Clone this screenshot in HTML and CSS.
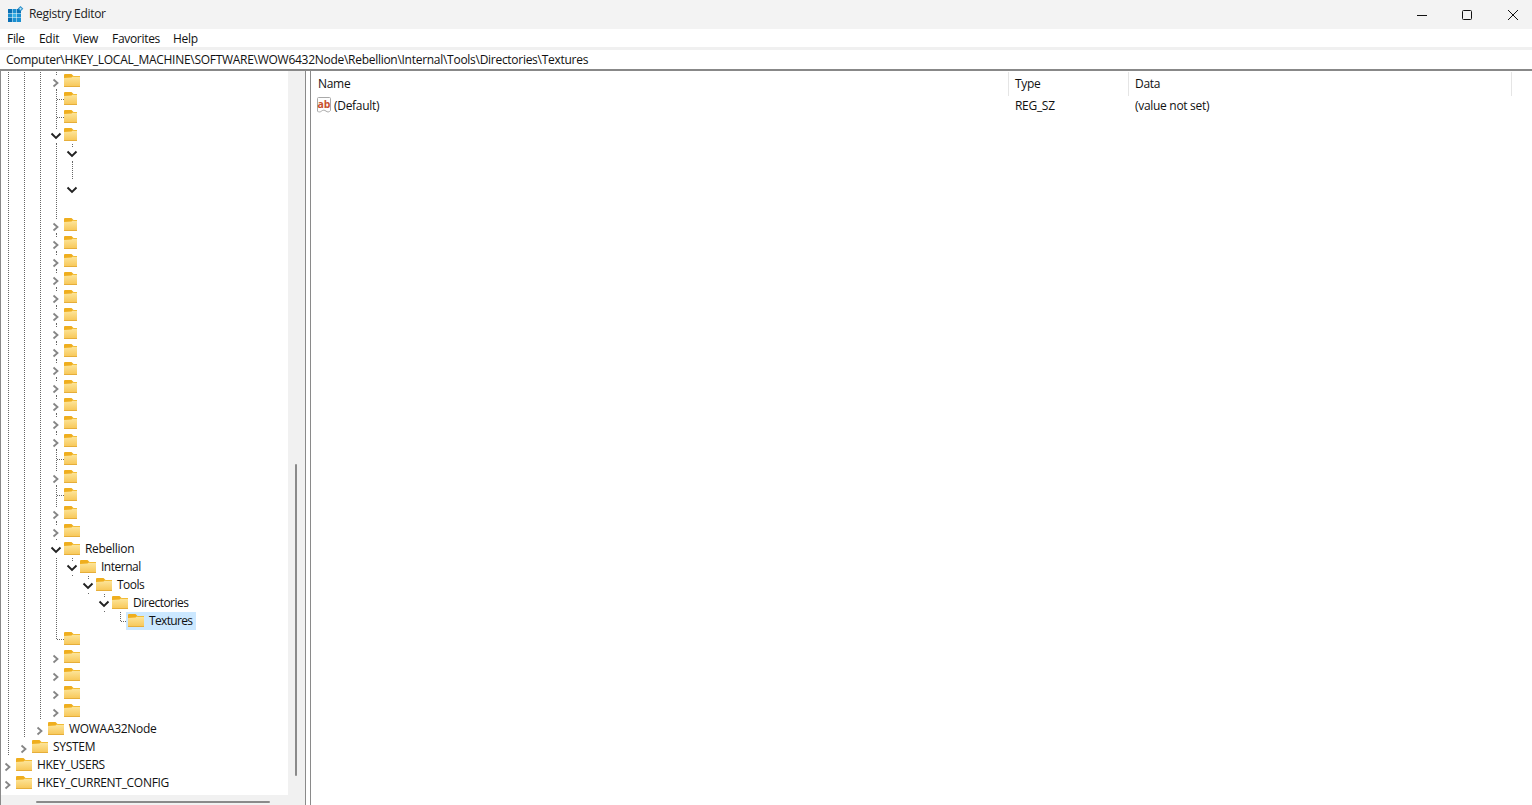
FILE: index.html
```html
<!DOCTYPE html>
<html lang="en">
<head>
<meta charset="utf-8">
<title>Registry Editor</title>
<link rel="stylesheet" href="styles.css">
</head>
<body>
<svg class="defs" xmlns="http://www.w3.org/2000/svg">
  <defs>
    <linearGradient id="fg" x1="0" y1="0" x2="0" y2="1">
      <stop offset="0" stop-color="#fde79f"/>
      <stop offset="1" stop-color="#f7c655"/>
    </linearGradient>
  </defs>
  <symbol id="folder" viewBox="0 0 16 18">
    <path d="M1 2h6.5l2 2H16v2H0V3a1 1 0 0 1 1-1z" fill="#efae1e"/>
    <path d="M0 6l7.5-.5L9.5 4H16v10a1 1 0 0 1-1 1H1a1 1 0 0 1-1-1z" fill="url(#fg)"/>
    <path d="M9.5 4H16v1H8.5z" fill="#f2bc36"/>
    <path d="M0 14h16v.4a.6.6 0 0 1-.6.6H.6a.6.6 0 0 1-.6-.6z" fill="#e6ae3a"/>
  </symbol>
  <symbol id="cr" viewBox="0 0 16 18">
    <path d="M5.5 7.5L9.5 11l-4 3.5" fill="none" stroke="#858585" stroke-width="1.8"/>
  </symbol>
  <symbol id="cd" viewBox="0 0 16 18">
    <path d="M3.5 7.5L8 12l4.5-4.5" fill="none" stroke="#222" stroke-width="1.9"/>
  </symbol>
  <symbol id="tee" viewBox="0 0 16 18">
    <path d="M8.5 0V18M9 9.5H16" fill="none" stroke="#666" stroke-dasharray="1 1"/>
  </symbol>
  <symbol id="ell" viewBox="0 0 16 18">
    <path d="M8.5 0V9M9 9.5H16" fill="none" stroke="#666" stroke-dasharray="1 1"/>
  </symbol>
</svg>

<header class="titlebar">
  <svg class="appicon" viewBox="0 0 16 16" width="16" height="16">
    <rect x="0" y="3" width="4" height="4" fill="#0a6fb4"/><rect x="4.5" y="3" width="4" height="4" fill="#1b8fd0"/><rect x="9" y="3" width="4" height="4" fill="#0a6fb4"/>
    <rect x="0" y="7.5" width="4" height="4" fill="#1b8fd0"/><rect x="4.5" y="7.5" width="4" height="4" fill="#36b0e6"/><rect x="9" y="7.5" width="4" height="4" fill="#1b8fd0"/>
    <rect x="0" y="12" width="4" height="4" fill="#0a6fb4"/><rect x="4.5" y="12" width="4" height="4" fill="#1b8fd0"/><rect x="9" y="12" width="4" height="4" fill="#1b8fd0"/>
    <path d="M12.5 0l2.8 2.8-2.8 2.8-2.8-2.8z" fill="#2a8fca"/><path d="M12.5 1.5l1.3 1.3-1.3 1.3-1.3-1.3z" fill="#bfe6f7"/>
  </svg>
  <span class="apptitle">Registry Editor</span>
  <div class="winbtns">
    <svg class="wb wb-min" viewBox="0 0 10 10" width="10" height="10"><path d="M0 5.5H10" stroke="#111" stroke-width="1"/></svg>
    <svg class="wb" viewBox="0 0 10 10" width="10" height="10"><rect x=".5" y=".5" width="9" height="9" rx="1" fill="none" stroke="#111"/></svg>
    <svg class="wb" viewBox="0 0 10 10" width="10" height="10"><path d="M0 0L10 10M10 0L0 10" stroke="#111" stroke-width="1"/></svg>
  </div>
</header>

<nav class="menubar">
  <span class="mi mi-file">File</span><span class="mi mi-edit">Edit</span><span class="mi mi-view">View</span><span class="mi mi-fav">Favorites</span><span class="mi">Help</span>
</nav>
<div class="addrgap"></div>
<div class="address">Computer\HKEY_LOCAL_MACHINE\SOFTWARE\WOW6432Node\Rebellion\Internal\Tools\Directories\Textures</div>

<main class="main">
  <section class="treepane">
    <div class="treetop">
      <div class="tree">
        <div class="row"><i class="g"></i><i class="g"></i><i class="g"></i><span class="c st"><svg class="ic"><use href="#cr"/></svg></span><svg class="ic"><use href="#folder"/></svg></div>
        <div class="row"><i class="g"></i><i class="g"></i><i class="g"></i><svg class="ic"><use href="#tee"/></svg><span class="fc"><svg class="ic"><use href="#folder"/></svg></span></div>
        <div class="row"><i class="g"></i><i class="g"></i><i class="g"></i><svg class="ic"><use href="#tee"/></svg><span class="fc"><svg class="ic"><use href="#folder"/></svg></span></div>
        <div class="row"><i class="g"></i><i class="g"></i><i class="g"></i><span class="c st"><svg class="ic"><use href="#cd"/></svg></span><span class="fc"><svg class="ic"><use href="#folder"/></svg></span></div>
        <div class="row"><i class="g"></i><i class="g"></i><i class="g"></i><i class="g"></i><span class="c st"><svg class="ic"><use href="#cd"/></svg></span></div>
        <div class="row"><i class="g"></i><i class="g"></i><i class="g"></i><i class="g"></i><i class="g"></i></div>
        <div class="row"><i class="g"></i><i class="g"></i><i class="g"></i><i class="g"></i><span class="c"><svg class="ic"><use href="#cd"/></svg></span></div>
        <div class="row"><i class="g"></i><i class="g"></i><i class="g"></i><i class="g"></i></div>
        <div class="row"><i class="g"></i><i class="g"></i><i class="g"></i><span class="c st"><svg class="ic"><use href="#cr"/></svg></span><span class="fc"><svg class="ic"><use href="#folder"/></svg></span></div>
        <div class="row"><i class="g"></i><i class="g"></i><i class="g"></i><span class="c st"><svg class="ic"><use href="#cr"/></svg></span><span class="fc"><svg class="ic"><use href="#folder"/></svg></span></div>
        <div class="row"><i class="g"></i><i class="g"></i><i class="g"></i><span class="c st"><svg class="ic"><use href="#cr"/></svg></span><span class="fc"><svg class="ic"><use href="#folder"/></svg></span></div>
        <div class="row"><i class="g"></i><i class="g"></i><i class="g"></i><span class="c st"><svg class="ic"><use href="#cr"/></svg></span><span class="fc"><svg class="ic"><use href="#folder"/></svg></span></div>
        <div class="row"><i class="g"></i><i class="g"></i><i class="g"></i><span class="c st"><svg class="ic"><use href="#cr"/></svg></span><span class="fc"><svg class="ic"><use href="#folder"/></svg></span></div>
        <div class="row"><i class="g"></i><i class="g"></i><i class="g"></i><span class="c st"><svg class="ic"><use href="#cr"/></svg></span><span class="fc"><svg class="ic"><use href="#folder"/></svg></span></div>
        <div class="row"><i class="g"></i><i class="g"></i><i class="g"></i><span class="c st"><svg class="ic"><use href="#cr"/></svg></span><span class="fc"><svg class="ic"><use href="#folder"/></svg></span></div>
        <div class="row"><i class="g"></i><i class="g"></i><i class="g"></i><span class="c st"><svg class="ic"><use href="#cr"/></svg></span><span class="fc"><svg class="ic"><use href="#folder"/></svg></span></div>
        <div class="row"><i class="g"></i><i class="g"></i><i class="g"></i><span class="c st"><svg class="ic"><use href="#cr"/></svg></span><span class="fc"><svg class="ic"><use href="#folder"/></svg></span></div>
        <div class="row"><i class="g"></i><i class="g"></i><i class="g"></i><span class="c st"><svg class="ic"><use href="#cr"/></svg></span><span class="fc"><svg class="ic"><use href="#folder"/></svg></span></div>
        <div class="row"><i class="g"></i><i class="g"></i><i class="g"></i><span class="c st"><svg class="ic"><use href="#cr"/></svg></span><span class="fc"><svg class="ic"><use href="#folder"/></svg></span></div>
        <div class="row"><i class="g"></i><i class="g"></i><i class="g"></i><span class="c st"><svg class="ic"><use href="#cr"/></svg></span><span class="fc"><svg class="ic"><use href="#folder"/></svg></span></div>
        <div class="row"><i class="g"></i><i class="g"></i><i class="g"></i><span class="c st"><svg class="ic"><use href="#cr"/></svg></span><span class="fc"><svg class="ic"><use href="#folder"/></svg></span></div>
        <div class="row"><i class="g"></i><i class="g"></i><i class="g"></i><svg class="ic"><use href="#tee"/></svg><span class="fc"><svg class="ic"><use href="#folder"/></svg></span></div>
        <div class="row"><i class="g"></i><i class="g"></i><i class="g"></i><span class="c st"><svg class="ic"><use href="#cr"/></svg></span><span class="fc"><svg class="ic"><use href="#folder"/></svg></span></div>
        <div class="row"><i class="g"></i><i class="g"></i><i class="g"></i><svg class="ic"><use href="#tee"/></svg><span class="fc"><svg class="ic"><use href="#folder"/></svg></span></div>
        <div class="row"><i class="g"></i><i class="g"></i><i class="g"></i><span class="c st"><svg class="ic"><use href="#cr"/></svg></span><span class="fc"><svg class="ic"><use href="#folder"/></svg></span></div>
        <div class="row"><i class="g"></i><i class="g"></i><i class="g"></i><span class="c st"><svg class="ic"><use href="#cr"/></svg></span><svg class="ic"><use href="#folder"/></svg></div>
        <div class="row"><i class="g"></i><i class="g"></i><i class="g"></i><span class="c"><svg class="ic"><use href="#cd"/></svg></span><svg class="ic"><use href="#folder"/></svg><span class="lbl">Rebellion</span></div>
        <div class="row"><i class="g"></i><i class="g"></i><i class="g"></i><i class="g"></i><span class="c st"><svg class="ic"><use href="#cd"/></svg></span><svg class="ic"><use href="#folder"/></svg><span class="lbl lc">Internal</span></div>
        <div class="row"><i class="g"></i><i class="g"></i><i class="g"></i><i class="g"></i><i class="b"></i><span class="c st"><svg class="ic"><use href="#cd"/></svg></span><svg class="ic"><use href="#folder"/></svg><span class="lbl lc">Tools</span></div>
        <div class="row"><i class="g"></i><i class="g"></i><i class="g"></i><i class="g"></i><i class="b"></i><i class="b"></i><span class="c st"><svg class="ic"><use href="#cd"/></svg></span><svg class="ic"><use href="#folder"/></svg><span class="lbl lc">Directories</span></div>
        <div class="row"><i class="g"></i><i class="g"></i><i class="g"></i><i class="g"></i><i class="b"></i><i class="b"></i><i class="b"></i><svg class="ic"><use href="#ell"/></svg><span class="sel"><svg class="ic"><use href="#folder"/></svg><span class="lbl lx">Textures</span></span></div>
        <div class="row"><i class="g"></i><i class="g"></i><i class="g"></i><svg class="ic"><use href="#ell"/></svg><svg class="ic"><use href="#folder"/></svg></div>
        <div class="row"><i class="g"></i><i class="g"></i><i class="g"></i><span class="c"><svg class="ic"><use href="#cr"/></svg></span><svg class="ic"><use href="#folder"/></svg></div>
        <div class="row"><i class="g"></i><i class="g"></i><i class="g"></i><span class="c"><svg class="ic"><use href="#cr"/></svg></span><svg class="ic"><use href="#folder"/></svg></div>
        <div class="row"><i class="g"></i><i class="g"></i><i class="g"></i><span class="c"><svg class="ic"><use href="#cr"/></svg></span><svg class="ic"><use href="#folder"/></svg></div>
        <div class="row"><i class="g"></i><i class="g"></i><i class="g"></i><span class="c"><svg class="ic"><use href="#cr"/></svg></span><svg class="ic"><use href="#folder"/></svg></div>
        <div class="row"><i class="g"></i><i class="g"></i><span class="c"><svg class="ic"><use href="#cr"/></svg></span><svg class="ic"><use href="#folder"/></svg><span class="lbl">WOWAA32Node</span></div>
        <div class="row"><i class="g"></i><span class="c"><svg class="ic"><use href="#cr"/></svg></span><svg class="ic"><use href="#folder"/></svg><span class="lbl">SYSTEM</span></div>
        <div class="row"><span class="c"><svg class="ic"><use href="#cr"/></svg></span><svg class="ic"><use href="#folder"/></svg><span class="lbl">HKEY_USERS</span></div>
        <div class="row"><span class="c"><svg class="ic"><use href="#cr"/></svg></span><svg class="ic"><use href="#folder"/></svg><span class="lbl">HKEY_CURRENT_CONFIG</span></div>
      </div>
      <div class="vscroll"><div class="vthumb"></div></div>
    </div>
    <div class="hscroll"><div class="hthumb"></div></div>
  </section>
  <div class="splitter"></div>
  <section class="list">
    <div class="lhead">
      <div class="col col-name">Name</div>
      <div class="col col-type">Type</div>
      <div class="col col-data">Data</div>
    </div>
    <div class="lrow">
      <div class="cell cell-name">
        <svg class="abicon" viewBox="0 0 16 17" width="16" height="17">
          <path d="M1.5 1.5a1 1 0 0 1 1-1h11a1 1 0 0 1 1 1v12c-1.5 1.8-3 1.8-4.5.6s-3-1.2-4.5 0-2.5 1-4 .2z" fill="#fdfdfd" stroke="#a9a9a9"/>
          <text class="abtext" x="8" y="10.5">ab</text>
        </svg>
        <span>(Default)</span>
      </div>
      <div class="cell cell-type">REG_SZ</div>
      <div class="cell cell-data">(value not set)</div>
    </div>
  </section>
</main>
</body>
</html>
```

FILE: styles.css
```css
* { box-sizing: border-box; }
html, body { margin: 0; padding: 0; height: 100%; }
body {
  width: 1532px;
  height: 805px;
  overflow: hidden;
  display: flex;
  flex-direction: column;
  background: #fff;
  color: #111;
  font: 12px/18px "Open Sans", "Noto Sans", sans-serif;
  letter-spacing: -0.3px;
}
.defs { display: block; width: 0; height: 0; }

.titlebar {
  height: 29px;
  flex: none;
  display: flex;
  align-items: center;
  background: #f3f3f3;
  padding-left: 8px;
}
.appicon { margin-top: -2px; flex: none; }
.apptitle { margin: -1px 0 0 5px; color: #222; }
.winbtns { margin-left: auto; display: flex; align-items: center; gap: 36px; padding-right: 14px; }
.wb { display: block; }
.wb-min { margin-right: -1px; }

.menubar { height: 18px; flex: none; display: flex; padding-left: 7px; line-height: 20px; }
.mi-file { width: 32px; }
.mi-edit { width: 34px; }
.mi-view { width: 39px; }
.mi-fav { width: 61px; }

.addrgap { height: 3px; flex: none; background: #f0f0f0; }
.address { height: 19px; flex: none; padding-left: 6px; line-height: 20px; white-space: nowrap; letter-spacing: -0.28px; }

.main {
  flex: 1;
  min-height: 0;
  display: flex;
  border-top: 2px solid #888;
}

.treepane { width: 305px; flex: none; display: flex; flex-direction: column; background: #f1f1f1; box-shadow: inset 1px 0 #8a8a8a; }
.treetop { flex: 1; min-height: 0; display: flex; }
.tree { width: 288px; flex: none; padding-top: 1px; background: #fff; overflow: hidden; box-shadow: inset 1px 0 #8a8a8a; }
.row { height: 18px; display: flex; }
.g, .b, .c { display: block; width: 16px; height: 18px; flex: none; }
.g { background: linear-gradient(#666 50%, transparent 50%) 8px 0 / 1px 2px repeat-y; }
.st {
  background:
    linear-gradient(#666 0 0) 8px 0 / 1px 1px no-repeat,
    linear-gradient(#666 0 0) 8px 2px / 1px 1px no-repeat,
    linear-gradient(#666 0 0) 8px 17px / 1px 1px no-repeat;
}
.ic { display: block; width: 16px; height: 18px; flex: none; }
.fc { display: block; width: 13px; height: 18px; overflow: hidden; flex: none; }
.lbl { margin-left: 5px; white-space: nowrap; color: #111; }
.lbl.lc { letter-spacing: -0.5px; }
.lbl.lx { letter-spacing: -0.65px; }
.sel { display: flex; height: 18px; margin-left: -2px; padding: 0 4px 0 2px; background: #cce8ff; }

.vscroll { width: 17px; flex: none; padding: 393px 0 0 7px; }
.vthumb { width: 2px; height: 312px; border-radius: 1px; background: #8a8a8a; }
.hscroll { height: 10px; flex: none; padding: 6px 0 0 36px; }
.hthumb { width: 234px; height: 2px; border-radius: 1px; background: #8a8a8a; }

.splitter { width: 6px; flex: none; border-left: 1px solid #8a8a8a; border-right: 1px solid #8a8a8a; }

.list { flex: 1; min-width: 0; padding-top: 1px; }
.lhead { display: flex; height: 24px; }
.col { height: 24px; line-height: 24px; padding-left: 6px; border-right: 1px solid #e5e5e5; }
.col-name { width: 698px; padding-left: 7px; }
.col-type { width: 120px; }
.col-data { width: 383px; }
.lrow { display: flex; height: 18px; margin-top: 1px; }
.cell { padding-left: 6px; white-space: nowrap; }
.cell-name { width: 698px; padding-left: 5px; display: flex; align-items: center; gap: 2px; }
.cell-type { width: 120px; }
.abicon { flex: none; margin-top: -1px; }
.abtext { font: bold 10.5px "Open Sans", sans-serif; fill: #c9502c; text-anchor: middle; letter-spacing: 0; }
```
